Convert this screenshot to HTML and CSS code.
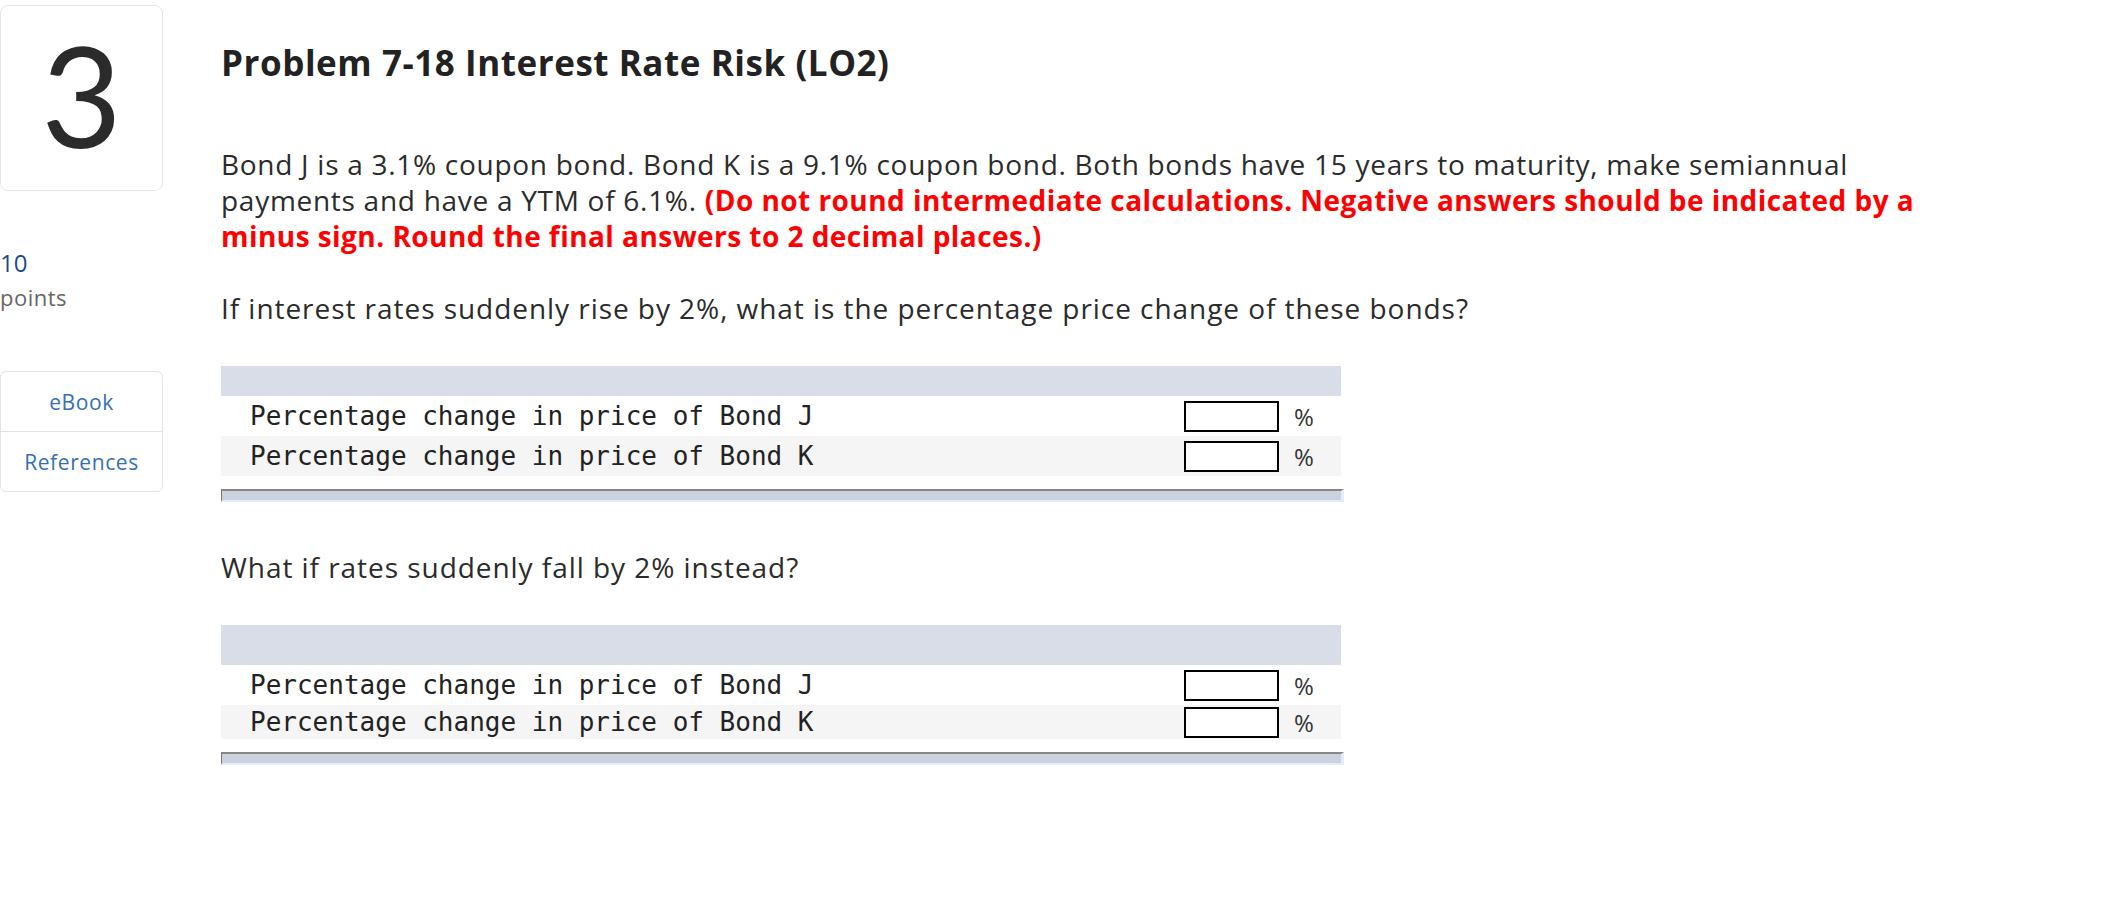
FILE: index.html
```html
<!DOCTYPE html>
<html lang="en">
<head>
<meta charset="utf-8">
<title>Problem 7-18 Interest Rate Risk (LO2)</title>
<link rel="stylesheet" href="styles.css">
</head>
<body>
<div class="page">
  <aside class="side">
    <div class="qnum">3</div>
    <div class="points">
      <div class="pts-val">10</div>
      <div class="pts-label">points</div>
    </div>
    <nav class="tools">
      <a class="tool">eBook</a>
      <a class="tool">References</a>
    </nav>
  </aside>
  <main class="content">
    <h1 class="title">Problem 7-18 Interest Rate Risk (LO2)</h1>
    <p class="intro">Bond J is a 3.1% coupon bond. Bond K is a 9.1% coupon bond. Both bonds have 15 years to maturity, make semiannual payments and have a YTM of 6.1%. <strong class="warn">(Do not round intermediate calculations. Negative answers should be indicated by a minus sign. Round the final answers to 2 decimal places.)</strong></p>
    <p class="question q1">If interest rates suddenly rise by 2%, what is the percentage price change of these bonds?</p>
    <div class="answer-block">
      <div class="answer-table">
        <div class="head"></div>
        <div class="row">
          <span class="label">Percentage change in price of Bond J</span>
          <input class="field" type="text">
          <span class="unit">%</span>
        </div>
        <div class="row alt">
          <span class="label">Percentage change in price of Bond K</span>
          <input class="field" type="text">
          <span class="unit">%</span>
        </div>
      </div>
      <div class="hscroll"></div>
    </div>
    <p class="question q2">What if rates suddenly fall by 2% instead?</p>
    <div class="answer-block second">
      <div class="answer-table">
        <div class="head tall"></div>
        <div class="row">
          <span class="label">Percentage change in price of Bond J</span>
          <input class="field" type="text">
          <span class="unit">%</span>
        </div>
        <div class="row alt short">
          <span class="label">Percentage change in price of Bond K</span>
          <input class="field" type="text">
          <span class="unit">%</span>
        </div>
      </div>
      <div class="hscroll"></div>
    </div>
  </main>
</div>
</body>
</html>
```
FILE: styles.css
```css
html, body {
  margin: 0;
  padding: 0;
  background: #ffffff;
}

body {
  font-family: "Open Sans", Lato, "Liberation Sans", sans-serif;
  color: #2b2b2b;
}

.page {
  display: flex;
  align-items: flex-start;
}

.side {
  width: 163px;
  flex: 0 0 163px;
  display: flex;
  flex-direction: column;
}

.qnum {
  margin-top: 5px;
  height: 186px;
  box-sizing: border-box;
  border: 1px solid #e6e6e6;
  border-radius: 8px;
  display: flex;
  align-items: center;
  justify-content: center;
  font-family: Lato, "Open Sans", sans-serif;
  font-size: 139px;
  line-height: 1;
  font-weight: 400;
  color: #2b2b2b;
  padding-bottom: 7px;
}

.points {
  margin-top: 57px;
}

.pts-val {
  font-size: 24px;
  line-height: 30px;
  color: #1d4b86;
}

.pts-label {
  margin-top: 4px;
  font-size: 22px;
  line-height: 30px;
  letter-spacing: 0.5px;
  color: #666666;
}

.tools {
  margin-top: 59px;
  border: 1px solid #e3e3e3;
  border-radius: 6px;
  display: flex;
  flex-direction: column;
}

.tool {
  height: 59px;
  display: flex;
  align-items: center;
  justify-content: center;
  font-size: 21px;
  letter-spacing: 0.6px;
  color: #3370b7;
}

.tool + .tool {
  border-top: 1px solid #e3e3e3;
}

.content {
  margin-left: 58px;
  width: 1740px;
}

.title {
  margin: 42px 0 0;
  font-size: 35px;
  line-height: 42px;
  font-weight: 700;
  letter-spacing: 0.55px;
  color: #222222;
}

.intro {
  margin: 62px 0 0;
  font-size: 28px;
  line-height: 36px;
  letter-spacing: 0.72px;
}

.warn {
  color: #ff0000;
  font-weight: 700;
  letter-spacing: 0.45px;
}

.question {
  margin: 36px 0 0;
  font-size: 28px;
  line-height: 36px;
  letter-spacing: 0.95px;
}

.question.q2 {
  margin-top: 47px;
}

.answer-block {
  margin-top: 40px;
  width: 1123px;
}

.answer-table {
  width: 1120px;
}

.head {
  height: 30px;
  background: #d8dde7;
}

.head.tall {
  height: 40px;
}

.row {
  height: 40px;
  display: flex;
  align-items: center;
  background: #ffffff;
}

.row.alt {
  background: #f5f5f5;
}

.row.short {
  height: 34px;
}

.label {
  flex: 1;
  padding-left: 29px;
  font-family: "DejaVu Sans Mono", "Liberation Mono", monospace;
  font-size: 26px;
  color: #222222;
  white-space: pre;
}

.field {
  width: 95px;
  height: 31px;
  box-sizing: border-box;
  border: 2px solid #000000;
  border-radius: 0;
  margin: 0;
  padding: 0 4px;
  background: #ffffff;
  font-size: 20px;
}

.unit {
  width: 62px;
  box-sizing: border-box;
  padding-left: 15px;
  font-size: 24px;
  color: #333333;
}

.hscroll {
  margin-top: 13px;
  height: 13px;
  box-sizing: border-box;
  border-top: 2px solid #878787;
  border-left: 1px solid #777777;
  border-right: 3px solid #e4ecf8;
  border-bottom: 2px solid #e4ecf8;
  background: #cbd2de;
}
```
